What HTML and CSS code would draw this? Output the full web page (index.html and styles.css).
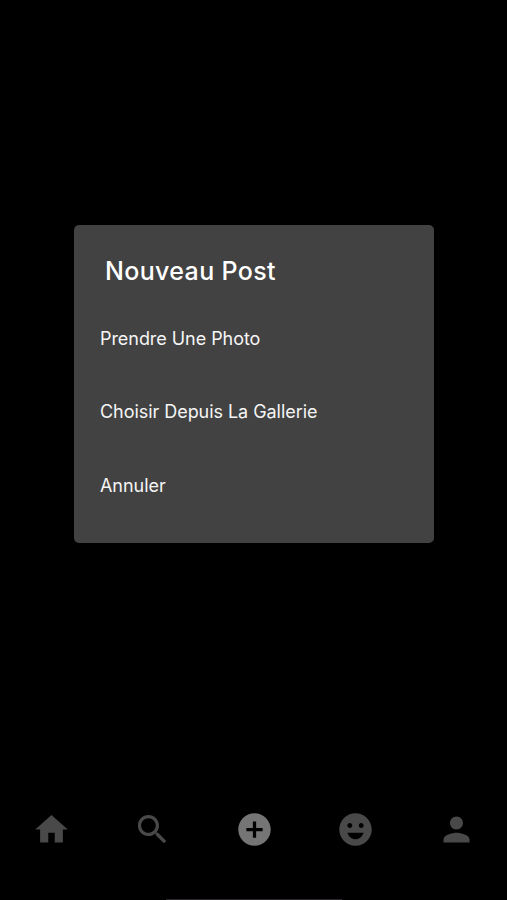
FILE: index.html
```
<!DOCTYPE html>
<html lang="fr">
  <head>
    <meta charset="UTF-8" />
    <meta name="viewport" content="width=device-width, initial-scale=1.0" />
    <title>Nouveau Post</title>
    <link rel="stylesheet" href="styles.css">
  </head>
  <body>
    <main class="screen">
      <div class="dialog" role="dialog" aria-labelledby="dialog-title">
        <h1 id="dialog-title">Nouveau Post</h1>
        <button class="option">Prendre Une Photo</button>
        <button class="option">Choisir Depuis La Gallerie</button>
        <button class="option">Annuler</button>
      </div>
    </main>
    <nav class="tab-bar">
      <a class="tab" aria-label="Accueil">
        <svg viewBox="0 0 24 24"><path d="M10 20v-6h4v6h5v-8h3L12 3 2 12h3v8z" /></svg>
      </a>
      <a class="tab" aria-label="Recherche">
        <svg viewBox="0 0 24 24"><path d="M15.5 14h-.79l-.28-.27C15.41 12.59 16 11.11 16 9.5 16 5.91 13.09 3 9.5 3S3 5.91 3 9.5 5.91 16 9.5 16c1.61 0 3.09-.59 4.23-1.57l.27.28v.79l5 4.99L20.49 19l-4.99-5zm-6 0C7.01 14 5 11.99 5 9.5S7.01 5 9.5 5 14 7.01 14 9.5 11.99 14 9.5 14z" /></svg>
      </a>
      <a class="tab active" aria-label="Ajouter">
        <svg viewBox="0 0 24 24"><path d="M12 2C6.48 2 2 6.48 2 12s4.48 10 10 10 10-4.48 10-10S17.52 2 12 2zm5 11h-4v4h-2v-4H7v-2h4V7h2v4h4v2z" /></svg>
      </a>
      <a class="tab" aria-label="Humeur">
        <svg viewBox="0 0 24 24"><path d="M12 2C6.47 2 2 6.47 2 12s4.47 10 10 10 10-4.47 10-10S17.53 2 12 2zM8.5 8c.83 0 1.5.67 1.5 1.5S9.33 11 8.5 11 7 10.33 7 9.5 7.67 8 8.5 8zM12 18c-2.28 0-4.22-1.66-5-4h10c-.78 2.34-2.72 4-5 4zm3.5-7c-.83 0-1.5-.67-1.5-1.5S14.67 8 15.5 8s1.5.67 1.5 1.5-.67 1.5-1.5 1.5z" /></svg>
      </a>
      <a class="tab" aria-label="Profil">
        <svg viewBox="0 0 24 24"><path d="M12 12c2.21 0 4-1.79 4-4s-1.79-4-4-4-4 1.79-4 4 1.79 4 4 4zm0 2c-2.67 0-8 1.34-8 4v2h16v-2c0-2.66-5.33-4-8-4z" /></svg>
      </a>
    </nav>
    <div class="home-indicator"></div>
  </body>
</html>
```

FILE: styles.css
```
* {
  margin: 0;
  padding: 0;
  box-sizing: border-box;
}
body {
  display: flex;
  flex-direction: column;
  height: 100vh;
  overflow: hidden;
  background-color: #000;
  color: #fff;
  font-family: Inter, "Liberation Sans", sans-serif;
}
.screen {
  flex: 1;
  padding: 225px 73px 0 74px;
}
.dialog {
  height: 318px;
  padding-top: 30px;
  border-radius: 5px;
  background-color: #424242;
}
h1 {
  height: 47px;
  padding-left: 31px;
  font-size: 25px;
  font-weight: 500;
  line-height: 32px;
  letter-spacing: 0.35px;
}
.option {
  display: block;
  width: 100%;
  height: 73.5px;
  padding-left: 26px;
  border: none;
  background: none;
  color: #f5f5f5;
  font-family: inherit;
  font-size: 18px;
  line-height: 24px;
  letter-spacing: -0.05px;
  text-align: left;
}
.tab-bar {
  display: flex;
  height: 59px;
  margin-bottom: 40px;
  padding-left: 1px;
}
.tab {
  display: flex;
  flex: 1;
  align-items: center;
  justify-content: center;
  color: #494949;
}
.tab.active {
  color: #757575;
}
.tab svg {
  width: 39px;
  height: 39px;
  fill: currentColor;
}
.home-indicator {
  width: 176px;
  height: 1px;
  margin: 0 auto;
  background-color: #2b282b;
}
```
